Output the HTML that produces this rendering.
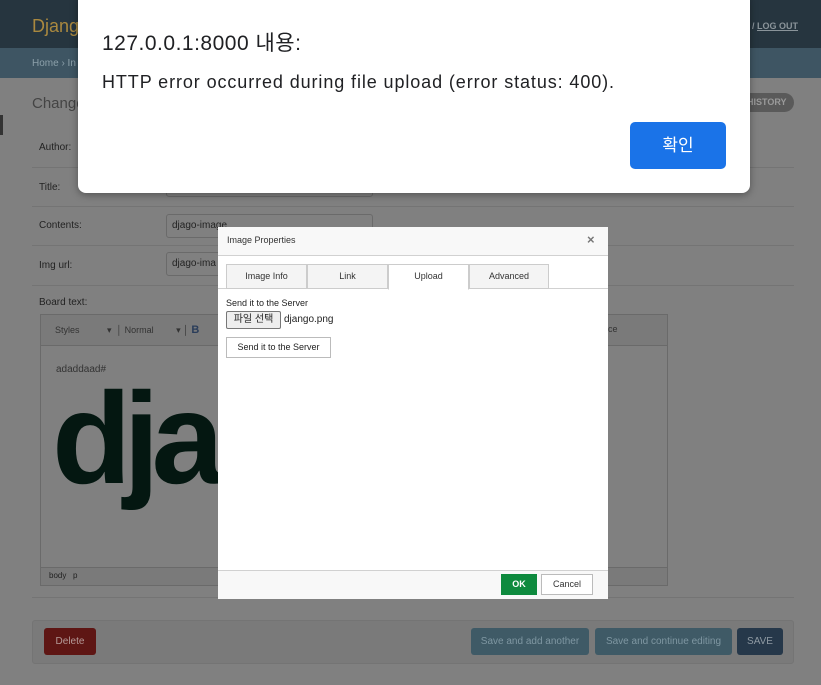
<!DOCTYPE html>
<html><head><meta charset="utf-8"><style>
*{box-sizing:border-box;margin:0;padding:0}
body{width:821px;height:685px;overflow:hidden;background:#808080;font-family:"Liberation Sans","Noto Sans CJK KR",sans-serif;position:relative}
.a{position:absolute}
.lbl{font-size:10px;color:#222}
.hr{position:absolute;left:32px;width:762px;height:1px;background:#747474}
.inp{position:absolute;left:166px;width:207px;height:24px;border:1px solid #6a6a6a;border-radius:3px;font-size:10px;color:#222;padding:5px 5px}
.tab{position:absolute;top:264px;height:25px;border:1px solid #ccc;background:#f4f4f4;font-size:9px;color:#333;text-align:center;line-height:23px}
</style></head><body>
<div class="a" style="left:0;top:0;width:821px;height:48px;background:#26353f"></div>
<div class="a" style="left:32px;top:16px;font-size:18px;color:#a9883f">Django</div>
<div class="a" style="left:752px;top:21px;font-size:9px;color:#8a949a;font-weight:bold">/ <u>LOG OUT</u></div>
<div class="a" style="left:0;top:48px;width:821px;height:30px;background:#3e5563"></div>
<div class="a" style="left:32px;top:58px;font-size:10px;color:#8ca0aa">Home › In</div>
<div class="a" style="left:0;top:115px;width:3px;height:20px;background:#333"></div>
<div class="a" style="left:32px;top:95px;font-size:15px;color:#444">Change</div>
<div class="a" style="left:735px;top:93px;width:59px;height:19px;border-radius:10px;background:#5a5a5a;color:#9a9a9a;font-size:9px;font-weight:bold;line-height:19px;padding-left:12px">HISTORY</div>
<div class="a lbl" style="left:39px;top:142px">Author:</div>
<div class="hr" style="top:167px"></div>
<div class="a lbl" style="left:39px;top:182px">Title:</div>
<div class="inp" style="top:175px;height:22px"></div>
<div class="hr" style="top:206px"></div>
<div class="a lbl" style="left:39px;top:220px">Contents:</div>
<div class="inp" style="top:214px">djago-image</div>
<div class="hr" style="top:245px"></div>
<div class="a lbl" style="left:39px;top:260px">Img url:</div>
<div class="inp" style="top:252px">djago-ima</div>
<div class="hr" style="top:285px"></div>
<div class="a lbl" style="left:39px;top:297px">Board text:</div>
<div class="a" style="left:40px;top:314px;width:628px;height:272px;border:1px solid #6a6a6a"></div>
<div class="a" style="left:41px;top:315px;width:626px;height:31px;background:#7a7a7a;border-bottom:1px solid #6a6a6a"></div>
<div class="a" style="left:55px;top:324px;font-size:9px;color:#333">Styles &nbsp; &nbsp; &nbsp; &nbsp; &nbsp; ▾ &nbsp;│ Normal &nbsp; &nbsp; &nbsp; &nbsp; ▾ │ <b style="color:#2a3d5a;font-size:11px">B</b></div>
<div class="a" style="left:600px;top:324px;font-size:9px;color:#333">urce</div>
<div class="a" style="left:56px;top:364px;font-size:10px;color:#333">adaddaad#</div>
<div class="a" style="left:52px;top:373px;font-size:130px;font-weight:bold;color:#041711;letter-spacing:-8px;line-height:1;width:166px;overflow:hidden;height:150px">dja</div>
<div class="a" style="left:41px;top:567px;width:626px;height:18px;background:#7a7a7a;border-top:1px solid #6a6a6a;font-size:8px;color:#222;padding:3px 8px">body &nbsp; p</div>
<div class="hr" style="top:597px"></div>
<div class="a" style="left:32px;top:620px;width:762px;height:44px;background:#7a7a7a;border:1px solid #747474;border-radius:3px"></div>
<div class="a" style="left:44px;top:628px;width:52px;height:27px;background:#5e1614;border-radius:3px;color:#b59a98;font-size:10px;text-align:center;line-height:27px">Delete</div>
<div class="a" style="left:471px;top:628px;width:118px;height:27px;background:#3f5a66;border-radius:3px;color:#7f97a2;font-size:10px;text-align:center;line-height:27px">Save and add another</div>
<div class="a" style="left:595px;top:628px;width:137px;height:27px;background:#3f5a66;border-radius:3px;color:#7f97a2;font-size:10px;text-align:center;line-height:27px">Save and continue editing</div>
<div class="a" style="left:737px;top:628px;width:46px;height:27px;background:#26384a;border-radius:3px;color:#8f9aa3;font-size:10px;text-align:center;line-height:27px">SAVE</div>

<div class="a" style="left:218px;top:227px;width:390px;height:372px;background:#fff"></div>
<div class="a" style="left:218px;top:227px;width:390px;height:29px;background:#f8f8f8;border-bottom:1px solid #d1d1d1"></div>
<div class="a" style="left:227px;top:235px;font-size:9px;color:#333">Image Properties</div>
<div class="a" style="left:587px;top:232px;font-size:13px;color:#777;font-weight:bold">×</div>
<div class="a" style="left:218px;top:288px;width:390px;height:1px;background:#d1d1d1"></div>
<div class="tab" style="left:226px;width:81px">Image Info</div>
<div class="tab" style="left:307px;width:81px">Link</div>
<div class="tab" style="left:388px;width:81px;background:#fff;border-bottom-color:#fff;height:26px">Upload</div>
<div class="tab" style="left:469px;width:80px">Advanced</div>
<div class="a" style="left:226px;top:298px;font-size:9px;color:#222">Send it to the Server</div>
<div class="a" style="left:226px;top:311px;width:55px;height:18px;border:1px solid #777;background:#eee;border-radius:2px;font-size:10px;line-height:16px;text-align:center;color:#222">파일 선택</div>
<div class="a" style="left:284px;top:314px;font-size:10px;color:#222">django.png</div>
<div class="a" style="left:226px;top:337px;width:105px;height:21px;border:1px solid #bbb;font-size:9px;line-height:19px;text-align:center;color:#222">Send it to the Server</div>
<div class="a" style="left:218px;top:570px;width:390px;height:29px;background:#f8f8f8;border-top:1px solid #d1d1d1"></div>
<div class="a" style="left:501px;top:574px;width:36px;height:21px;background:#0e8a3e;color:#fff;font-size:9px;font-weight:bold;text-align:center;line-height:21px">OK</div>
<div class="a" style="left:541px;top:574px;width:52px;height:21px;border:1px solid #bbb;background:#fff;color:#333;font-size:9px;text-align:center;line-height:19px">Cancel</div>

<div class="a" style="left:78px;top:-8px;width:672px;height:201px;background:#fff;border-radius:8px;box-shadow:0 2px 8px rgba(0,0,0,.35)"></div>
<div class="a" style="left:102px;top:27px;font-size:21px;color:#202124;letter-spacing:0.5px">127.0.0.1:8000 내용:</div>
<div class="a" style="left:102px;top:72px;font-size:18px;color:#202124;letter-spacing:0.9px">HTTP error occurred during file upload (error status: 400).</div>
<div class="a" style="left:630px;top:122px;width:96px;height:47px;background:#1a73e8;border-radius:5px;color:#fff;font-size:17px;text-align:center;line-height:47px">확인</div>
</body></html>
